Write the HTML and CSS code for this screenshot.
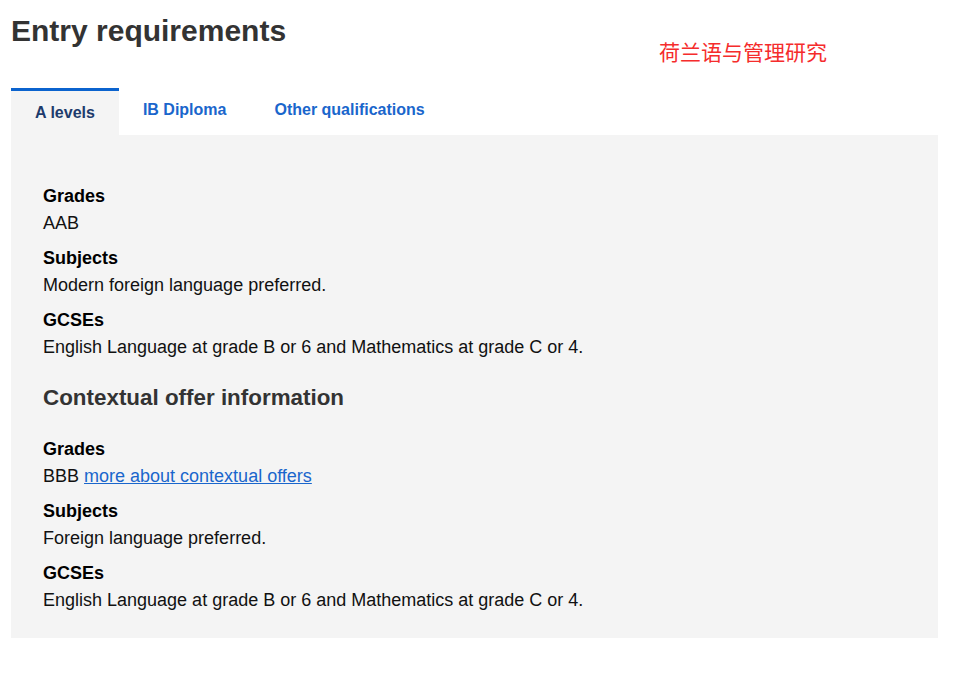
FILE: index.html
```html
<!DOCTYPE html>
<html lang="en">
<head>
    <meta charset="UTF-8">
    <meta name="viewport" content="width=device-width, initial-scale=1.0">
    <title>Entry requirements</title>
    <link rel="stylesheet" href="styles.css">
</head>
<body>
    <div class="page">
        <h1>Entry requirements</h1>
        <div class="note">荷兰语与管理研究</div>

        <div class="tabs">
            <a class="tab active" href="#">A levels</a>
            <a class="tab" href="#">IB Diploma</a>
            <a class="tab" href="#">Other qualifications</a>
        </div>

        <div class="panel">
            <dl class="reqs">
                <dt>Grades</dt>
                <dd>AAB</dd>
                <dt>Subjects</dt>
                <dd>Modern foreign language preferred.</dd>
                <dt>GCSEs</dt>
                <dd>English Language at grade B or 6 and Mathematics at grade C or 4.</dd>
            </dl>

            <h2>Contextual offer information</h2>

            <dl class="reqs">
                <dt>Grades</dt>
                <dd>BBB <a href="#">more about contextual offers</a></dd>
                <dt>Subjects</dt>
                <dd>Foreign language preferred.</dd>
                <dt>GCSEs</dt>
                <dd class="last">English Language at grade B or 6 and Mathematics at grade C or 4.</dd>
            </dl>
        </div>
    </div>
</body>
</html>
```

FILE: styles.css
```css
body {
    font-family: Arial, "Liberation Sans", sans-serif;
    margin: 0;
    padding: 14px 15px 0 11px;
    background: #fff;
    color: #000;
}
.page {
    position: relative;
}
h1 {
    margin: 0;
    font-size: 30px;
    font-weight: bold;
    color: #333;
}
.note {
    position: absolute;
    left: 648px;
    top: 27px;
    font-family: "Noto Sans CJK SC", sans-serif;
    font-size: 21px;
    line-height: 1;
    color: #f52c2c;
}
.tabs {
    display: flex;
    align-items: flex-start;
    margin-top: 40px;
}
.tab {
    display: block;
    padding: 13px 24px 13px;
    font-size: 16px;
    font-weight: bold;
    color: #1a66cc;
    text-decoration: none;
}
.tab.active {
    background: #f4f4f4;
    border-top: 3px solid #0b63ce;
    color: #1d3b6c;
}
.panel {
    background: #f4f4f4;
    padding: 48px 32px 24px;
}
.reqs {
    margin: 0;
    font-size: 18px;
    line-height: 27px;
}
.reqs dt {
    font-weight: bold;
}
.reqs dd {
    margin: 0 0 8px;
    color: #111;
}
.reqs dd.last {
    margin-bottom: 0;
}
.reqs a {
    color: #1a66cc;
}
h2 {
    margin: 22px 0 24px;
    font-size: 22.4px;
    line-height: 29px;
    font-weight: bold;
    color: #333;
}
```
